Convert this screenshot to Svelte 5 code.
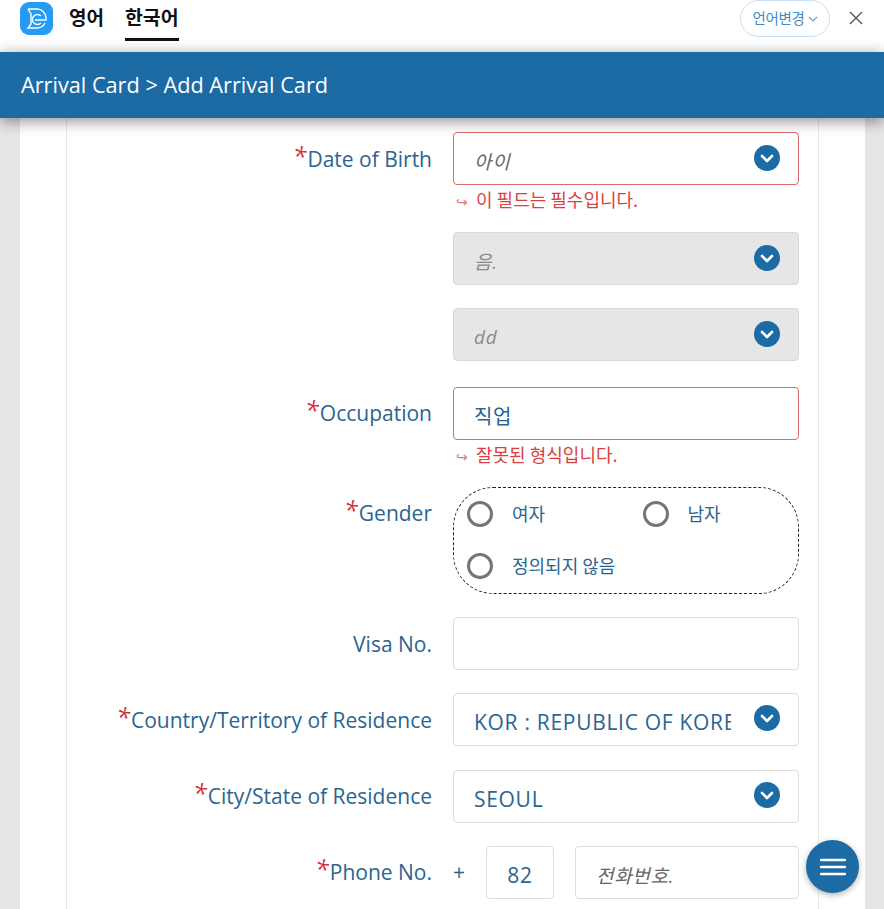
<script>
  const chevron = 'M-5 -2 L0 3 L5 -2';
</script>

{#snippet caret()}
  <svg class="caret" width="26" height="26" viewBox="-13 -13 26 26" aria-hidden="true">
    <circle r="13" fill="#1c6ba4" />
    <path d={chevron} fill="none" stroke="#fff" stroke-width="2.6" stroke-linecap="round" stroke-linejoin="round" />
  </svg>
{/snippet}

{#snippet radio(label)}
  <div class="radio"><span class="dot"></span><span class="rtext">{label}</span></div>
{/snippet}

<div class="page">
  <header class="top">
    <svg class="logo" width="33" height="33" viewBox="0 0 33 33" aria-hidden="true">
      <rect width="33" height="33" rx="9" fill="#259bf4" />
      <path d="M8 7h9a9 9 0 0 1 9 9v2H15M8 7l3 5v10l-3 4h9a9 9 0 0 0 8-5" fill="none" stroke="#fff" stroke-width="1.4" />
      <path d="M21 14a5 5 0 1 0 0 7" fill="none" stroke="#fff" stroke-width="1.4" />
    </svg>
    <nav class="tabs">
      <span class="tab">영어</span>
      <span class="tab active">한국어</span>
    </nav>
    <div class="lang">
      언어변경
      <svg width="10" height="6" viewBox="0 0 10 6" aria-hidden="true"><path d="M1 1l4 4 4-4" fill="none" stroke="#6aa3cc" stroke-width="1.2" /></svg>
    </div>
    <svg class="close" width="14" height="14" viewBox="0 0 14 14" aria-hidden="true"><path d="M1 1l12 12M13 1L1 13" stroke="#555" stroke-width="1.4" /></svg>
  </header>

  <div class="bar">Arrival Card &gt; Add Arrival Card</div>

  <main class="card">
    <div class="inner">
      <div class="row">
        <label class="lbl low"><i>*</i>Date of Birth</label>
        <div class="field">
          <div class="input err ph"><span class="val">아이</span>{@render caret()}</div>
          <div class="msg"><small>↪</small>이 필드는 필수입니다.</div>
        </div>
      </div>
      <div class="row">
        <span></span>
        <div class="field"><div class="input off ph"><span class="val">음.</span>{@render caret()}</div></div>
      </div>
      <div class="row gap3">
        <span></span>
        <div class="field"><div class="input off ph"><span class="val">dd</span>{@render caret()}</div></div>
      </div>
      <div class="row">
        <label class="lbl"><i>*</i>Occupation</label>
        <div class="field">
          <div class="input err"><span class="val">직업</span></div>
          <div class="msg"><small>↪</small>잘못된 형식입니다.</div>
        </div>
      </div>
      <div class="row">
        <label class="lbl"><i>*</i>Gender</label>
        <div class="field">
          <div class="gender">
            {@render radio('여자')}
            {@render radio('남자')}
            {@render radio('정의되지 않음')}
          </div>
        </div>
      </div>
      <div class="row">
        <label class="lbl low">Visa No.</label>
        <div class="field"><div class="input"></div></div>
      </div>
      <div class="row gap1">
        <label class="lbl low"><i>*</i>Country/Territory of Residence</label>
        <div class="field"><div class="input"><span class="val clip">KOR : REPUBLIC OF KOREA</span>{@render caret()}</div></div>
      </div>
      <div class="row">
        <label class="lbl"><i>*</i>City/State of Residence</label>
        <div class="field"><div class="input"><span class="val">SEOUL</span>{@render caret()}</div></div>
      </div>
      <div class="row">
        <label class="lbl"><i>*</i>Phone No.</label>
        <div class="field phone">
          <span class="plus">+</span>
          <div class="input code"><span class="val">82</span></div>
          <div class="input ph num"><span class="val">전화번호.</span></div>
        </div>
      </div>
    </div>
  </main>

  <button class="fab" aria-label="menu">
    <svg width="26" height="18" viewBox="0 0 26 18" aria-hidden="true"><path d="M1 2h24M1 9h24M1 16h24" stroke="#fff" stroke-width="2.4" stroke-linecap="round" /></svg>
  </button>
</div>

<style>
  :global(body) { margin: 0; background: #e6e6e6; }
  .page {
    position: relative; width: 884px; height: 909px; overflow: hidden;
    background: #e6e6e6; display: flex; flex-direction: column;
    font-family: "Open Sans", "Noto Sans CJK KR", sans-serif; color: #1c6ba4;
  }
  .top {
    height: 52px; flex: none; background: #fff; display: flex; align-items: flex-start;
    padding: 0 20px; box-sizing: border-box;
  }
  .logo { margin-top: 2px; flex: none; }
  .tabs { display: flex; gap: 21px; margin-left: 16px; }
  .tab {
    font: 700 19px/1 "Noto Sans CJK KR", sans-serif; color: #111; padding: 7px 0 0; height: 38px; box-sizing: border-box;
  }
  .tab.active { border-bottom: 3px solid #111; height: 41px; font-size: 19.4px; }
  .lang {
    margin-left: auto; width: 90px; height: 37px; box-sizing: border-box; border: 1.5px solid #c5dff0;
    border-radius: 19px; display: flex; align-items: center; justify-content: center; gap: 3px;
    font: 400 14.5px/1 "Noto Sans CJK KR", sans-serif; color: #3d8bc4; background: #fff;
    letter-spacing: -0.3px;
  }
  .close { margin: 11px 1px 0 19px; flex: none; }
  .bar {
    height: 66px; flex: none; background: #1c6ba4; color: #fff; font-size: 21.7px; line-height: 66px;
    padding-left: 21px; box-shadow: 0 3px 14px rgba(0,0,0,.45); position: relative; z-index: 2;
  }
  .card { margin: 0 19px 0 20px; background: #fff; flex: 1; padding: 0 46px; min-height: 0; }
  .inner {
    height: 100%; box-sizing: border-box; border-left: 1px solid #e8e8e8; border-right: 1px solid #e8e8e8;
    padding-top: 14px;
  }
  .row {
    display: grid; grid-template-columns: 365px 346px; column-gap: 21px; margin-bottom: 23px;
  }
  .row.gap3 { margin-bottom: 26px; }
  .row.gap1 { margin-bottom: 24px; }
  .lbl {
    text-align: right; font-size: 21px; line-height: 27px; padding-top: 13px; color: #2a6591; white-space: nowrap;
  }
  .lbl.low { padding-top: 14px; }
  .lbl i { color: #cf2f3a; font-size: 25px; line-height: 0; font-style: italic; position: relative; top: -1px; margin-right: 1px; }
  .input {
    height: 53px; box-sizing: border-box; border: 1px solid #dcdcdc; border-radius: 4px; background: #fff;
    display: flex; align-items: center; padding: 4px 5px 0 20px; font-size: 21px;
    font-family: "Open Sans", "Noto Sans CJK KR", sans-serif; color: #2a6591;
  }
  .input.err { border-color: #dd6a6a; font-size: 20px; }
  .input.off { background: #e6e6e6; border-color: #d8d8d8; }
  .input.ph { color: #666; font-style: italic; font-size: 19px; padding-top: 5px; }
  .input.off.ph { color: #8a8a8a; }
  .val { flex: 1; min-width: 0; white-space: nowrap; overflow: hidden; letter-spacing: .7px; }
  .clip { margin-right: 23px; }
  .caret { flex: none; margin-top: -7px; margin-right: 13px; }
  .msg {
    height: 25px; margin-top: 2px; margin-bottom: -3px; font: 400 18px/24px "Noto Sans CJK KR", sans-serif;
    color: #d9413f; padding-left: 3px;
  }
  .msg small { font-size: 14px; margin-right: 8px; color: #e07a78; }
  .gender {
    height: 107px; box-sizing: border-box; border: 1px dashed #222; border-radius: 40px;
    display: grid; grid-template-columns: 175.5px 1fr; grid-auto-rows: 52px; padding: 0 13px;
    align-items: center; align-content: start;
  }
  .radio {
    display: flex; align-items: center; gap: 19px; font: 400 18px/1 "Noto Sans CJK KR", sans-serif; color: #2a6591;
  }
  .rtext { padding-bottom: 2px; }
  .dot {
    width: 26px; height: 26px; border-radius: 50%; border: 3px solid #757575; box-sizing: border-box; flex: none;
  }
  .phone { display: flex; align-items: flex-start; }
  .plus { width: 33px; font-size: 21px; line-height: 53px; color: #2a6591; }
  .code { width: 68px; padding: 4px 0 0; text-align: center; }
  .code .val { text-align: center; }
  .num { flex: 1; margin-left: 21px; }
  .fab {
    position: absolute; left: 806px; top: 840px; width: 53px; height: 53px; border-radius: 50%;
    border: none; background: #1c6ba4; box-shadow: 0 2px 6px rgba(0,0,0,.3); display: flex;
    align-items: center; justify-content: center; padding: 0; z-index: 3;
  }
</style>
